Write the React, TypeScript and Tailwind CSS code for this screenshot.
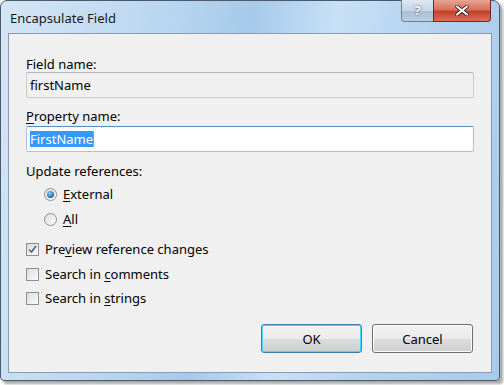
import React from 'react';

const font = { fontFamily: '"Noto Sans", "Open Sans", sans-serif' };

function U({ children }: { children: React.ReactNode }) {
  return <span className="underline underline-offset-2 decoration-1">{children}</span>;
}

function Radio({ checked }: { checked?: boolean }) {
  return (
    <span className="w-[13px] h-[13px] rounded-full border border-[#8e8f8f] bg-gradient-to-br from-[#dcdcdc] to-[#ffffff] flex items-center justify-center shrink-0">
      {checked && (
        <span className="w-[7px] h-[7px] rounded-full bg-[radial-gradient(circle_at_40%_35%,#8fd4ff,#1a64a8_70%)]" />
      )}
    </span>
  );
}

function Check({ checked }: { checked?: boolean }) {
  return (
    <span className="w-[13px] h-[13px] border border-[#8e8f8f] bg-gradient-to-br from-[#dcdcdc] to-[#fbfbfb] flex items-center justify-center shrink-0">
      {checked && (
        <svg width="9" height="9" viewBox="0 0 9 9">
          <path d="M1 4.5 L3.5 7 L8 1" stroke="#4a5f97" strokeWidth="1.6" fill="none" />
        </svg>
      )}
    </span>
  );
}

function WinButton({ label, primary }: { label: string; primary?: boolean }) {
  return (
    <button
      className={`w-[101px] h-[29px] rounded-[3px] border text-[13px] text-black flex items-center justify-center bg-[linear-gradient(#f2f2f2_0%,#ebebeb_50%,#dddddd_51%,#cfcfcf_100%)] ${
        primary ? 'border-[#3c7fb1] shadow-[inset_0_0_0_1px_#48d8fb]' : 'border-[#707070] shadow-[inset_0_0_0_1px_#fcfcfc]'
      }`}
    >
      {label}
    </button>
  );
}

export default function App() {
  return (
    <div className="w-[504px] h-[385px] bg-white relative overflow-hidden" style={font}>
      <div className="w-[500px] h-[381px] rounded-t-[7px] rounded-b-[4px] border border-[#4a5a6b] bg-[linear-gradient(100deg,#d4e6f6_0%,#b9d6f0_30%,#a6caeb_45%,#c7e0f6_60%,#b2d1ee_80%,#a9cbeb_100%)] shadow-[3px_3px_3px_rgba(0,0,0,0.35)] flex flex-col">
        <div className="h-[32px] flex items-start justify-between pl-[9px] pr-[8px]">
          <span className="text-[13px] text-[#1a1a1a] mt-[8px]">Encapsulate Field</span>
          <div className="flex h-[22px] -mt-px">
            <div className="w-[32px] rounded-bl-[4px] border border-[#6e7f93] border-t-0 border-r-0 bg-[linear-gradient(#dbe6f2_0%,#c4d5e7_50%,#a9bfd8_51%,#b9cde2_100%)] flex items-center justify-center">
              <span className="text-[13px] font-bold text-white [text-shadow:0_0_2px_#333] leading-none">?</span>
            </div>
            <div className="w-[58px] rounded-br-[4px] border border-[#6e2a24] border-t-0 bg-[linear-gradient(#e8a593_0%,#d7735e_45%,#c2412b_55%,#d8705a_100%)] flex items-center justify-center">
              <svg width="14" height="11" viewBox="0 0 14 11">
                <path d="M2 1.5 L12 9.5 M12 1.5 L2 9.5" stroke="#3a1a16" strokeWidth="3.6" strokeLinecap="round" />
                <path d="M2 1.5 L12 9.5 M12 1.5 L2 9.5" stroke="#ffffff" strokeWidth="2.2" strokeLinecap="round" />
              </svg>
            </div>
          </div>
        </div>
        <div className="flex-1 mx-[7px] mb-[7px] border border-[#8a9bae] bg-[#f0f0f0] flex flex-col pl-[17px] pr-[17px] pt-[22px] text-[13px] text-black leading-[16px]">
          <span>Field name:</span>
          <div className="h-[26px] rounded-[2px] border border-[#c8ccd2] border-t-[#b3b7bd] bg-[#f0f0f0] flex items-center px-[3px]">
            firstName
          </div>
          <span className="mt-[10px]">
            <U>P</U>roperty name:
          </span>
          <div className="mt-[2px] h-[26px] rounded-[2px] border border-[#abc1de] border-t-[#5d8ec1] bg-white flex items-center px-[3px]">
            <span className="bg-[#3399ff] text-white">FirstName</span>
            <span className="w-px h-[16px] bg-[#f08a24]" />
          </div>
          <span className="mt-[11px]">Update references:</span>
          <div className="mt-[7px] ml-[18px] flex items-center gap-[6px]">
            <Radio checked />
            <span>
              <U>E</U>xternal
            </span>
          </div>
          <div className="mt-[9px] ml-[18px] flex items-center gap-[6px]">
            <Radio />
            <span>
              <U>A</U>ll
            </span>
          </div>
          <div className="mt-[14px] flex items-center gap-[6px]">
            <Check checked />
            <span>
              Pre<U>v</U>iew reference changes
            </span>
          </div>
          <div className="mt-[9px] flex items-center gap-[6px]">
            <Check />
            <span>
              Search in <U>c</U>omments
            </span>
          </div>
          <div className="mt-[8px] flex items-center gap-[6px]">
            <Check />
            <span>
              Search in <U>s</U>trings
            </span>
          </div>
          <div className="mt-[18px] mr-[1px] flex justify-end gap-[10px]">
            <WinButton label="OK" primary />
            <WinButton label="Cancel" />
          </div>
        </div>
      </div>
    </div>
  );
}
